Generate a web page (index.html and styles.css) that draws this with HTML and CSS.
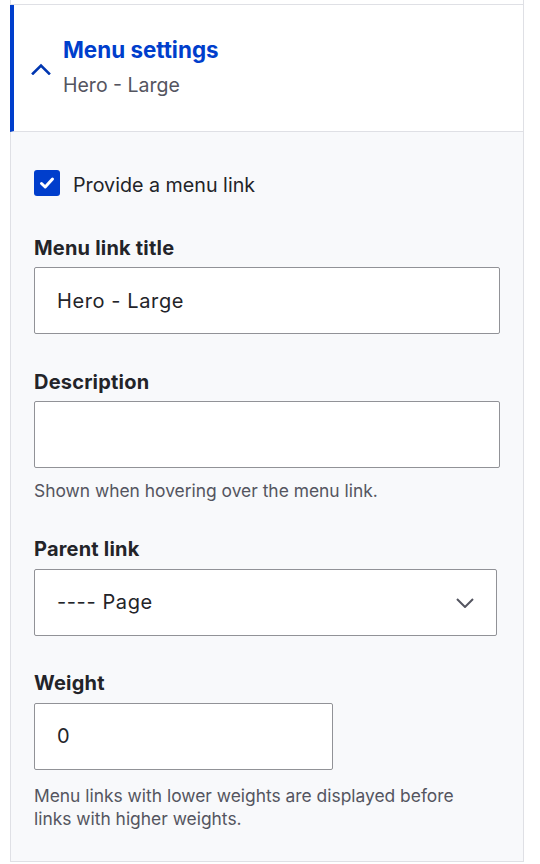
FILE: index.html
```html
<!DOCTYPE html>
<html lang="en">
<head>
<meta charset="utf-8">
<title>Menu settings</title>
<link rel="stylesheet" href="styles.css">
</head>
<body>
<div class="panel">
  <div class="prev"></div>
  <div class="summary">
    <svg class="chev-up" width="20" height="12" viewBox="0 0 20 12" aria-hidden="true"><path d="M2 10.5 L10 2.5 L18 10.5" fill="none" stroke="#0036b1" stroke-width="2.6" stroke-linecap="square"/></svg>
    <div class="summary-text">
      <div class="summary-title">Menu settings</div>
      <div class="summary-sub">Hero - Large</div>
    </div>
  </div>
  <div class="content">
    <div class="check-row">
      <span class="checkbox"><svg width="26" height="26" viewBox="0 0 26 26" aria-hidden="true"><path d="M7.5 13.5 L11.2 17 L18.5 9" fill="none" stroke="#fff" stroke-width="3" stroke-linecap="round" stroke-linejoin="round"/></svg></span>
      <span class="check-label">Provide a menu link</span>
    </div>

    <div class="form-item form-item--first">
      <label class="label" for="title">Menu link title</label>
      <input class="input" id="title" type="text" value="Hero - Large">
    </div>

    <div class="form-item">
      <label class="label" for="desc">Description</label>
      <input class="input" id="desc" type="text" value="">
      <div class="help">Shown when hovering over the menu link.</div>
    </div>

    <div class="form-item">
      <label class="label" for="parent">Parent link</label>
      <div class="select-wrap">
        <select class="input select" id="parent"><option>---- Page</option></select>
        <svg class="chev-down" width="18" height="10" viewBox="0 0 18 10" aria-hidden="true"><path d="M1 1 L9 9 L17 1" fill="none" stroke="#545560" stroke-width="2"/></svg>
      </div>
    </div>

    <div class="form-item">
      <label class="label" for="weight">Weight</label>
      <div class="weight-wrap">
        <input class="input" id="weight" type="text" value="0">
      </div>
      <div class="help help--spaced">Menu links with lower weights are displayed before links with higher weights.</div>
    </div>
  </div>
</div>
</body>
</html>
```
FILE: styles.css
```css
html, body {
  margin: 0;
  padding: 0;
  background: #ffffff;
}

body {
  font-family: Inter, "Noto Sans", sans-serif;
  color: #232429;
}

.panel {
  margin-left: 10px;
  width: 514px;
}

.prev {
  height: 4px;
  border-left: 1px solid #dfe0e5;
  border-right: 1px solid #dfe0e5;
  border-bottom: 1px solid #dfe0e5;
  background: #ffffff;
}

.summary {
  box-sizing: border-box;
  height: 127px;
  display: flex;
  align-items: center;
  padding: 0 0 2px 17px;
  background: #ffffff;
  border-left: 4px solid #003ecc;
  border-right: 1px solid #dfe0e5;
  border-bottom: 1px solid #dfe0e5;
}

.chev-up {
  flex: none;
  margin-top: 3px;
  margin-right: 12px;
}

.summary-title {
  font-size: 22.4px;
  line-height: 28px;
  font-weight: 700;
  color: #003ecc;
}

.summary-sub {
  margin-top: 8px;
  font-size: 19.5px;
  line-height: 26px;
  color: #545560;
}

.content {
  background: #f8f9fb;
  border-left: 1px solid #dfe0e5;
  border-right: 1px solid #dfe0e5;
  border-bottom: 1px solid #dfe0e5;
  padding: 38px 23px 31px;
}

.check-row {
  display: flex;
  align-items: flex-start;
  gap: 13px;
  height: 26px;
}

.checkbox {
  flex: none;
  width: 26px;
  height: 26px;
  border-radius: 3px;
  background: #003ecc;
  display: block;
}

.checkbox svg {
  display: block;
}

.check-label {
  font-size: 19.7px;
  line-height: 30px;
  color: #232429;
}

.form-item {
  margin-top: 34.5px;
}

.form-item--first {
  margin-top: 38.5px;
}

.label {
  display: block;
  font-size: 20px;
  line-height: 26px;
  font-weight: 700;
  letter-spacing: 0.2px;
  color: #232429;
  margin-bottom: 6.5px;
}

.input {
  box-sizing: border-box;
  display: block;
  width: 100%;
  height: 67px;
  margin: 0;
  padding: 0 22px;
  border: 1px solid #919297;
  border-radius: 2px;
  background: #ffffff;
  font-family: Inter, "Noto Sans", sans-serif;
  font-size: 20px;
  letter-spacing: 0.6px;
  color: #232429;
  outline: none;
}

.select-wrap {
  position: relative;
  width: 463px;
}

.select {
  appearance: none;
  -webkit-appearance: none;
}

.chev-down {
  position: absolute;
  right: 23px;
  top: 50%;
  margin-top: -4px;
  pointer-events: none;
}

.weight-wrap {
  width: 299px;
}

.help {
  margin-top: 10.5px;
  max-width: 440px;
  font-size: 17.4px;
  line-height: 23px;
  color: #545560;
}

.help--spaced {
  margin-top: 14.5px;
}
```
